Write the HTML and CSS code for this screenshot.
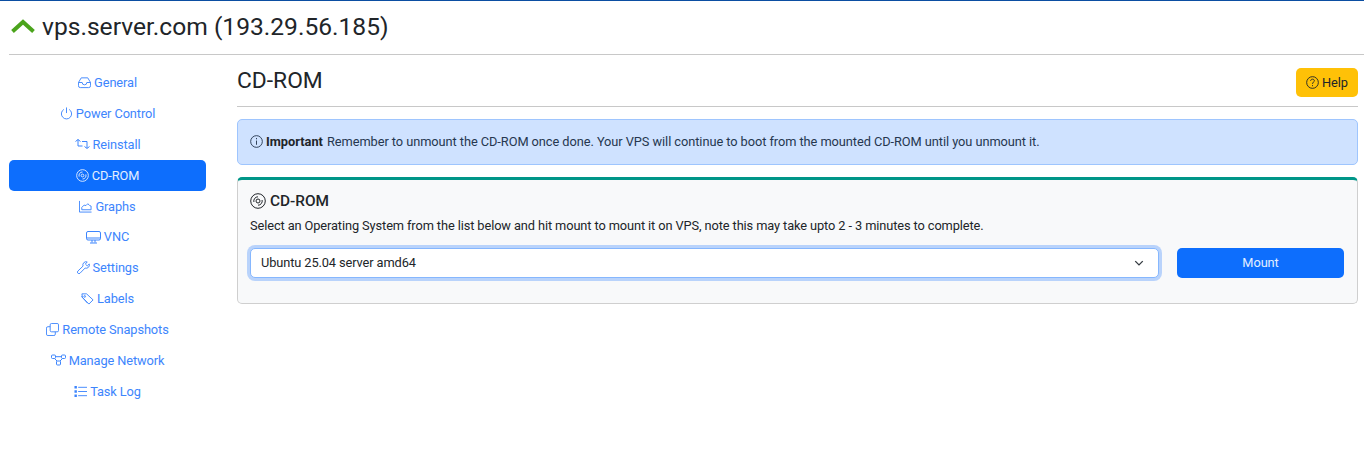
FILE: index.html
```html
<!DOCTYPE html>
<html lang="en">
<head>
<meta charset="utf-8">
<title>CD-ROM</title>
<link rel="stylesheet" href="styles.css">
</head>
<body>
<header class="top">
  <svg class="status" viewBox="0 0 24 14"><path d="M1.500 12.500 12 3l10.500 9.500"/></svg>
  <h1 class="host">vps.server.com (193.29.56.185)</h1>
</header>
<div class="layout">
  <nav class="side">
    <a class="item" href="#"><svg class="ic" viewBox="0 0 14 14"><path d="M3.500 2h7l3 5v3.500a2 2 0 0 1-2 2h-9a2 2 0 0 1-2-2V7zM.5 7h4a2.500 2.500 0 0 0 5 0h4"/></svg>General</a>
    <a class="item" href="#"><svg class="ic" viewBox="0 0 14 14"><path d="M7 .5v6M4.200 2.600a5.500 5.500 0 1 0 5.600 0"/></svg>Power Control</a>
    <a class="item" href="#"><svg class="ic wide" viewBox="0 0 15 14"><path d="M.5 4.500 3 2.500l2.500 2M3 2.500v6.500h4.500M7 4.500h5V11M9.500 9.500 12 11.500l2.500-2"/></svg>Reinstall</a>
    <a class="item on" href="#"><svg class="ic" viewBox="0 0 14 14"><circle cx="7" cy="7" r="6.300"/><path d="M7 3.200A3.800 3.800 0 0 0 3.400 8.200M7 10.800A3.800 3.800 0 0 0 10.600 5.800"/><circle cx="7" cy="7" r="1.500"/></svg>CD-ROM</a>
    <a class="item" href="#"><svg class="ic" viewBox="0 0 14 14"><path d="M.5 1v12h13M3 10.500V8l2.500-2.500L7.500 6l2-2 2 2 1.500.5v4z"/></svg>Graphs</a>
    <a class="item" href="#"><svg class="ic wide" viewBox="0 0 15 14"><rect x=".5" y="1.500" width="14" height="8.500" rx="1.500"/><path d="M.5 8h14M6 10v2.500M9 10v2.500M4 13h7"/></svg>VNC</a>
    <a class="item" href="#"><svg class="ic" viewBox="0 0 14 14"><path d="M13.200 3.200 11 5.300 9 3.300 11 1a3.500 3.500 0 0 0-4.500 4.500L1 10.800a1.600 1.600 0 0 0 2.200 2.400l5.500-5.600a3.500 3.500 0 0 0 4.500-4.400z"/></svg>Settings</a>
    <a class="item" href="#"><svg class="ic" viewBox="0 0 14 14"><path d="M1 2h5l7 6.500-4.500 4.500L1.500 6zM.5 4.500 7 12"/><circle cx="4" cy="4.800" r=".9"/></svg>Labels</a>
    <a class="item" href="#"><svg class="ic" viewBox="0 0 14 14"><rect x="4.500" y=".5" width="9" height="9" rx="1.500"/><path d="M4.500 4H2a1.500 1.500 0 0 0-1.500 1.500V12A1.500 1.500 0 0 0 2 13.500h6.500A1.500 1.500 0 0 0 10 12V9.500"/></svg>Remote Snapshots</a>
    <a class="item" href="#"><svg class="ic wide" viewBox="0 0 15 14"><rect x=".5" y="2" width="4" height="3.500" rx="1"/><rect x="10.500" y="2" width="4" height="3.500" rx="1"/><rect x="5.500" y="8" width="4" height="4" rx="1"/><path d="M4.500 3.700h6M3.500 5.500l2.500 2.500M11.500 5.500 9 8"/></svg>Manage Network</a>
    <a class="item" href="#"><svg class="ic" viewBox="0 0 14 14"><path d="M4.500 2.500H14M4.500 7H14M4.500 11.500H14"/><path class="dots" d="M.5 1.200h2.600v2.600H.5zM.5 5.700h2.600v2.600H.5zM.5 10.200h2.600v2.600H.5z"/></svg>Task Log</a>
  </nav>
  <main class="main">
    <div class="head">
      <h2 class="title">CD-ROM</h2>
      <a class="help" href="#"><svg class="ic" viewBox="0 0 14 14"><circle cx="7" cy="7" r="6.300"/><path d="M5 5.300C5 4 6 3.400 7 3.400s2 .6 2 1.800C9 6.600 7 6.600 7 8.500M7 9.800v1.200"/></svg>Help</a>
    </div>
    <div class="alert"><svg class="ic" viewBox="0 0 14 14"><circle cx="7" cy="7" r="6.300"/><path d="M7 6v4.500M7 3.200v1.400"/></svg><strong>Important</strong><span class="msg">Remember to unmount the CD-ROM once done. Your VPS will continue to boot from the mounted CD-ROM until you unmount it.</span></div>
    <section class="card">
      <h3 class="card-title"><svg class="ic big" viewBox="0 0 16 16"><circle cx="8" cy="8" r="7.300"/><path d="M8 3.800A4.200 4.200 0 0 0 3.900 9M8 12.200A4.200 4.200 0 0 0 12.100 7"/><circle cx="8" cy="8" r="2"/></svg>CD-ROM</h3>
      <p class="card-text">Select an Operating System from the list below and hit mount to mount it on VPS, note this may take upto 2 - 3 minutes to complete.</p>
      <div class="row">
        <div class="pick">
          <select class="select"><option>Ubuntu 25.04 server amd64</option></select>
          <svg class="chev" viewBox="0 0 16 16"><path d="m3 5.500 5 5 5-5"/></svg>
        </div>
        <button class="mount" type="button">Mount</button>
      </div>
    </section>
  </main>
</div>
</body>
</html>
```
FILE: styles.css
```css
* { box-sizing: border-box; }
html, body { margin: 0; padding: 0; }
body {
  background: #fff;
  color: #212529;
  font-family: "Roboto", sans-serif;
  font-size: 12.8px;
  letter-spacing: -0.1px;
  height: 464px;
  overflow: hidden;
  border-top: 1px solid #0b4ea2;
}
.top {
  display: flex;
  align-items: center;
  height: 54px;
  margin-left: 9px;
  border-bottom: 1px solid #c8c8c8;
  padding-left: 2px;
}
.status { width: 24px; height: 14px; margin-right: 7px; margin-top: -3px; flex: none; }
.status path { fill: none; stroke: #4ba41c; stroke-width: 4px; }
.host { margin: 0; font-size: 24.6px; font-weight: 400; letter-spacing: 0; line-height: 1.2; padding-bottom: 1px; }
.layout {
  display: grid;
  grid-template-columns: 197px 1fr;
  column-gap: 31px;
  padding: 12px 6px 0 9px;
}
.side { display: flex; flex-direction: column; }
.item {
  display: flex;
  align-items: center;
  justify-content: center;
  height: 30.9px;
  flex: none;
  color: #3d85fd;
  text-decoration: none;
  border-radius: 5px;
}
.item.on { background: #0d6efd; color: #e3eeff; }
.ic {
  width: 13px;
  height: 13px;
  margin-right: 3px;
  flex: none;
  fill: none;
  stroke: currentColor;
  stroke-width: 1px;
}
.ic.wide { width: 15px; height: 14px; }
.ic .dots { fill: currentColor; stroke: none; }
.ic.big { width: 16px; height: 16px; margin-right: 4px; }
.main { min-width: 0; }
.head {
  display: flex;
  align-items: center;
  justify-content: space-between;
  height: 40px;
  border-bottom: 1px solid #c8c8c8;
}
.title { margin: 0; font-size: 22.8px; font-weight: 400; letter-spacing: 0; padding-bottom: 12px; }
.help {
  display: flex;
  align-items: center;
  justify-content: center;
  width: 62px;
  height: 29px;
  margin-bottom: 9px;
  background: #ffc107;
  color: #212529;
  border-radius: 5px;
  text-decoration: none;
}
.alert {
  display: flex;
  align-items: center;
  height: 46px;
  margin-top: 12px;
  padding: 0 12px 2px;
  background: #cfe2ff;
  border: 1px solid #9ec5fe;
  border-radius: 5px;
  color: #26374f;
}
.alert strong { font-weight: 700; color: #212529; margin-right: 4px; letter-spacing: 0; }
.msg { letter-spacing: -0.06px; }
.card {
  height: 127px;
  margin-top: 12px;
  padding: 11px 13px 0 12px;
  background: #f8f9fa;
  border: 1px solid #cfcfcf;
  border-top: 3px solid #009688;
  border-radius: 5px;
}
.card-title {
  display: flex;
  align-items: center;
  margin: 0;
  height: 20px;
  font-size: 15.4px;
  font-weight: 500;
  letter-spacing: 0;
}
.card-text { margin: 6px 0 0; height: 18px; line-height: 18px; }
.row { display: flex; column-gap: 18px; margin-top: 13px; }
.pick { position: relative; flex: 1; }
.select {
  display: block;
  width: 100%;
  height: 30px;
  padding: 0 10px 2px;
  appearance: none;
  background: #fff;
  border: 1px solid #86b7fe;
  border-radius: 5px;
  box-shadow: 0 0 0 3px #b9d3fb;
  color: #212529;
  font: inherit;
  letter-spacing: inherit;
  outline: none;
}
.chev { position: absolute; right: 14px; top: 9px; width: 12px; height: 12px; pointer-events: none; }
.chev path { fill: none; stroke: #343a40; stroke-width: 1.800px; }
.mount {
  width: 167px;
  height: 30px;
  padding: 0 0 2px;
  background: #0d6efd;
  color: #e3eeff;
  border: 0;
  border-radius: 5px;
  font: inherit;
  letter-spacing: inherit;
}
```
